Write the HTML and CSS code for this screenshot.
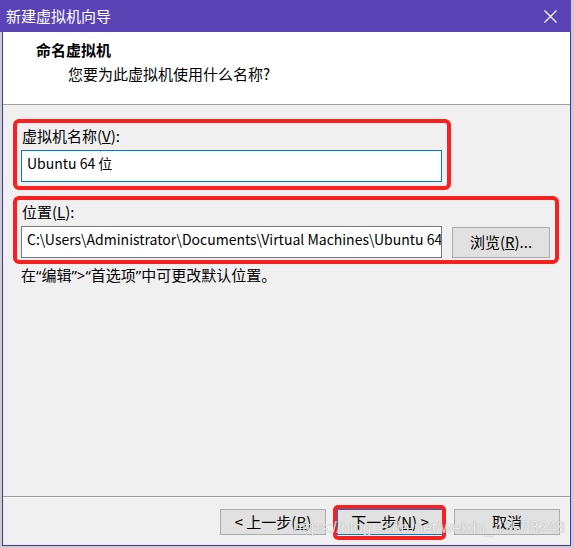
FILE: index.html
```html
<!DOCTYPE html>
<html lang="zh-CN">
<head>
<meta charset="utf-8">
<title>新建虚拟机向导</title>
<link rel="stylesheet" href="styles.css">
</head>
<body>
<div class="window">
  <div class="titlebar">
    <span class="title">新建虚拟机向导</span>
    <svg class="close" width="13" height="13" viewBox="0 0 13 13"><path d="M0.5 0.5 L12.5 12.5 M12.5 0.5 L0.5 12.5" stroke="#fff" stroke-width="1.2" fill="none"/></svg>
  </div>
  <div class="header">
    <div class="h-title">命名虚拟机</div>
    <div class="h-sub">您要为此虚拟机使用什么名称?</div>
  </div>
  <div class="content">
    <div class="group g-name">
      <div class="label">虚拟机名称(<u>V</u>):</div>
      <div class="input focused">Ubuntu 64 位</div>
    </div>
    <div class="group g-loc">
      <div class="label">位置(<u>L</u>):</div>
      <div class="row">
        <div class="input">C:\Users\Administrator\Documents\Virtual Machines\Ubuntu 64</div>
        <div class="btn browse">浏览(<u>R</u>)...</div>
      </div>
    </div>
    <div class="hint">在<span class="q">“</span>编辑<span class="q">”&gt;“</span>首选项<span class="q">”</span>中可更改默认位置。</div>
  </div>
  <div class="footer">
    <div class="btn">&lt; 上一步(<u>B</u>)</div>
    <div class="btn primary">下一步(<u>N</u>) &gt;</div>
    <div class="btn">取消</div>
  </div>
  <div class="watermark">https://blog.csdn.net/weixin_43578248</div>
</div>
</body>
</html>
```
FILE: styles.css
```css
html, body {
  margin: 0;
  padding: 0;
  width: 574px;
  height: 548px;
  overflow: hidden;
  background: #c9ced2;
}

.window {
  position: relative;
  margin-left: 2px;
  width: 569px;
  height: 546px;
  box-sizing: border-box;
  border: 1px solid #4330b5;
  border-top: 0;
  background: #f0f0f0;
  display: flex;
  flex-direction: column;
  font-family: "Noto Sans CJK SC", sans-serif;
  font-size: 15px;
  color: #000;
}

.titlebar {
  height: 32px;
  margin: 0 -1px 0 -3px;
  padding-left: 6px;
  background: #5a44b5;
  color: #fff;
  display: flex;
  align-items: center;
  justify-content: space-between;
  flex: none;
}

.title {
  line-height: 20px;
}

.close {
  margin-right: 14px;
  display: block;
}

.header {
  height: 64px;
  flex: none;
  background: #fff;
  border-bottom: 1px solid #a0a0a0;
  padding: 8px 0 0 33px;
}

.h-title {
  font-weight: bold;
  line-height: 20px;
}

.h-sub {
  line-height: 20px;
  margin: 4px 0 0 32px;
}

.content {
  flex: 1;
  padding: 14px 10px 0 10px;
  border-bottom: 1px solid #a0a0a0;
  display: flex;
  flex-direction: column;
  align-items: flex-start;
}

.group {
  box-sizing: border-box;
  border: 4px solid #fb2020;
  border-radius: 6px;
}

.g-name {
  width: 438px;
  padding: 3px 5px 4px 4px;
}

.g-loc {
  width: 546px;
  margin-top: 6px;
  padding: 2px 5px 2px 4px;
}

.label {
  line-height: 20px;
  padding-left: 1px;
}

.input {
  margin-top: 4px;
  width: 421px;
  height: 32px;
  box-sizing: border-box;
  border: 1px solid #7a7a7a;
  background: #fff;
  padding-left: 5px;
  font-size: 14px;
  line-height: 25px;
  white-space: nowrap;
  overflow: hidden;
}

.input.focused {
  border-color: #0078d7;
}

.row {
  display: flex;
  align-items: center;
  gap: 10px;
  margin-top: 4px;
}

.row .input {
  margin-top: 0;
}

.btn {
  box-sizing: border-box;
  height: 26px;
  width: 106px;
  background: #e1e1e1;
  border: 1px solid #adadad;
  display: flex;
  align-items: center;
  justify-content: center;
  line-height: 20px;
  position: relative;
}

.btn.browse {
  width: 98px;
  height: 31px;
}

.btn.primary {
  border-color: #0078d7;
}

.btn.primary::after {
  content: "";
  position: absolute;
  left: -5px;
  right: -4px;
  top: -5px;
  bottom: -6px;
  border: 4px solid #fb2020;
  border-radius: 5px;
}

.hint {
  margin-top: 1px;
  line-height: 20px;
  padding-left: 8px;
}

.q {
  font-family: "Noto Sans", sans-serif;
}

.footer {
  flex: none;
  height: 48px;
  box-sizing: border-box;
  border-top: 1px solid #fff;
  display: flex;
  justify-content: flex-end;
  align-items: flex-start;
  gap: 11px;
  padding: 11px 10px 0 0;
}

.watermark {
  position: absolute;
  left: 290px;
  top: 519px;
  font-family: "Liberation Sans", Arial, sans-serif;
  font-size: 16px;
  line-height: 18px;
  color: rgba(255, 255, 255, 0.8);
  text-shadow: 0 0 1px rgba(90, 90, 90, 0.6);
  white-space: nowrap;
  pointer-events: none;
}
```
